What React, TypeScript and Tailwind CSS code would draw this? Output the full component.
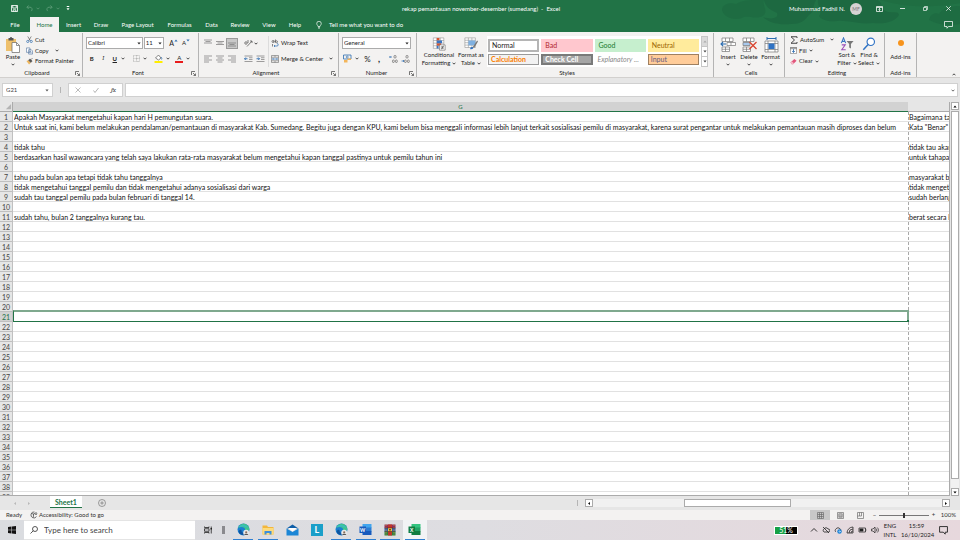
import type { ReactNode } from 'react';

type Kids = { children?: ReactNode };

/* ---------- small shared pieces ---------- */

function Caret({ className = '' }: { className?: string }) {
  return (
    <svg viewBox="0 0 6 4" className={`h-[3px] w-[4px] shrink-0 ${className}`} fill="currentColor">
      <path d="M0.6 0.6h4.8L3 3.4z" />
    </svg>
  );
}

function Chevron({ className = '' }: { className?: string }) {
  return (
    <svg viewBox="0 0 6 4" className={`h-[3px] w-[4px] shrink-0 ${className}`} fill="none" stroke="currentColor" strokeWidth="1.2">
      <path d="M0.8 0.8L3 3l2.2-2.2" />
    </svg>
  );
}

function Launcher() {
  return (
    <button aria-label="More options" className="absolute right-[2px] bottom-px">
      <svg viewBox="0 0 10 10" className="h-[5px] w-[5px]" fill="none" stroke="#555" strokeWidth="1.6">
        <path d="M1 8V1h7M4 4l5 5M9 5v4H5" />
      </svg>
    </button>
  );
}

function Group({ title, className, launcher, children }: Kids & { title: string; className: string; launcher?: boolean }) {
  return (
    <section className={`relative flex shrink-0 flex-col justify-between border-r border-[#b4b4b4] ${className}`}>
      <div className="flex h-[34px]">{children}</div>
      <div className="h-[8px] text-center leading-[8px]">{title}</div>
      {launcher && <Launcher />}
    </section>
  );
}

function IconButton({ label, className = '', children }: Kids & { label: string; className?: string }) {
  return (
    <button aria-label={label} className={`flex h-[11px] w-[12px] items-center justify-center ${className}`}>
      {children}
    </button>
  );
}

function Lines({ rows, className = '' }: { rows: [number, number, number][]; className?: string }) {
  return (
    <svg viewBox="0 0 16 16" className={`h-[8px] w-[8px] ${className}`} stroke="#777" strokeWidth="1.4">
      {rows.map(([y, a, b]) => (
        <path key={y} d={`M${a} ${y}H${b}`} />
      ))}
    </svg>
  );
}

function Picker({ label, value, width }: { label: string; value: string; width: string }) {
  return (
    <label className={`relative flex h-[12px] items-center border border-[#ababab] bg-white ${width}`}>
      <span className="sr-only">{label}</span>
      <select className="w-full appearance-none pl-[1px] leading-[10px] outline-none" defaultValue={value}>
        <option>{value}</option>
      </select>
      <Caret className="absolute right-[1px]" />
    </label>
  );
}

/* ---------- title bar ---------- */

function TitleArt() {
  return (
    <svg viewBox="0 0 240 32" className="absolute top-0 right-0 h-[32px] w-[240px]" fill="#1b633d">
      <path d="M2 10c0-6 8-8 14-6 6-4 14-4 22-4h6c-2 6 4 10 0 15-6 5-14 1-20 2-6 4-20 2-22-7z" opacity=".45" />
      <path d="M44 0h52c-4 7-1 11-7 15-5 6-8 9-18 9-12 1-22-1-28-7 9 3 16 1 14-4-7-3-12-7-13-13z" opacity=".6" />
      <path d="M98 0h60c6 4 2 10 10 12 6 1 10-1 11 3-5 8-16 9-26 8-14 2-24-3-36-2-8 1-16-1-18-5 4-4-2-10-1-16z" opacity=".6" />
      <path d="M209 20c1-5 6-8 10-6 3-6 12-8 21-8v18c-10 2-22 1-31-4z" opacity=".45" />
      <path d="M160 0h80v3c-20 4-50 6-80-3z" opacity=".3" />
    </svg>
  );
}

const tabs: [string, string][] = [
  ['Insert', 'w-[29px]'],
  ['Draw', 'w-[26px]'],
  ['Page Layout', 'w-[47px]'],
  ['Formulas', 'w-[37px]'],
  ['Data', 'w-[27px]'],
  ['Review', 'w-[30px]'],
  ['View', 'w-[28px]'],
  ['Help', 'w-[24px]'],
];

function Header() {
  return (
    <header className="relative shrink-0 bg-[#217346] text-white">
      <TitleArt />
      <div className="relative flex h-[17px] items-center">
        <div className="flex flex-1 items-center pl-[11px]">
          <button aria-label="Save">
            <svg viewBox="0 0 16 16" className="h-[7px] w-[7px]" fill="none" stroke="white" strokeWidth="2">
              <path d="M1 1h14v14H1zM4 1v6h8V1M5 15v-4h6v4" />
            </svg>
          </button>
          <button aria-label="Undo" className="ml-[8px] flex items-center gap-[3px] text-[#5d9b78]">
            <svg viewBox="0 0 16 16" className="h-[7px] w-[7px]" fill="none" stroke="currentColor" strokeWidth="2">
              <path d="M6 1L2 5l4 4M2 5h7a5 5 0 0 1 3 9" />
            </svg>
            <Chevron />
          </button>
          <button aria-label="Redo" className="ml-[6px] flex items-center gap-[3px] text-[#5d9b78]">
            <svg viewBox="0 0 16 16" className="h-[7px] w-[7px]" fill="none" stroke="currentColor" strokeWidth="2">
              <path d="M10 1l4 4-4 4M14 5H7a5 5 0 0 0-3 9" />
            </svg>
            <Chevron />
          </button>
          <button aria-label="Customize toolbar" className="ml-[6px]">
            <svg viewBox="0 0 6 8" className="h-[5px] w-[4px]" fill="white">
              <path d="M1 0h4v1.400H1zM0.600 3.400h4.800L3 6.600z" />
            </svg>
          </button>
        </div>
        <h1 className="whitespace-pre">rekap pemantauan november-desember (sumedang)  -  Excel</h1>
        <div className="flex flex-1 items-center justify-end pr-[9px]">
          <span>Muhammad Fadhil N.</span>
          <span className="ml-[5px] flex h-[12px] w-[12px] items-center justify-center rounded-full bg-[#d6d2d3] text-[5px] text-[#777]">MF</span>
          <button aria-label="Ribbon display options" className="ml-[14px]">
            <svg viewBox="0 0 14 12" className="h-[6px] w-[7px]" fill="none" stroke="white" strokeWidth="1.5">
              <path d="M1 1h12v10H1zM1 3h12M7 10V5M5 7l2-2 2 2" />
            </svg>
          </button>
          <button aria-label="Minimize" className="ml-[17px]">
            <svg viewBox="0 0 10 10" className="h-[5px] w-[5px]" stroke="white" strokeWidth="1.600"><path d="M0 5h10" /></svg>
          </button>
          <button aria-label="Restore" className="ml-[18px]">
            <svg viewBox="0 0 10 10" className="h-[5px] w-[5px]" fill="none" stroke="white" strokeWidth="1.300"><path d="M1 3h6v6H1zM3 3V1h6v6H7" /></svg>
          </button>
          <button aria-label="Close" className="ml-[18px]">
            <svg viewBox="0 0 10 10" className="h-[5px] w-[5px]" stroke="white" strokeWidth="1.500"><path d="M0.500 0.500l9 9M9.500 0.500l-9 9" /></svg>
          </button>
        </div>
      </div>
      <nav className="relative flex h-[15px] items-center">
        <button className="w-[30px] text-center">File</button>
        <button className="h-full w-[29px] bg-[#f3f2f1] text-center text-[#217346]">Home</button>
        {tabs.map(([name, w]) => (
          <button key={name} className={`${w} whitespace-nowrap text-center`}>{name}</button>
        ))}
        <button className="ml-[9px] flex items-center gap-[7px]">
          <svg viewBox="0 0 12 16" className="h-[8px] w-[6px]" fill="none" stroke="white" strokeWidth="1.400">
            <path d="M4 11C4 9 1.500 8 1.500 5a4.500 4.500 0 0 1 9 0c0 3-2.500 4-2.500 6zM4 13.500h4M5 15.500h2" />
          </svg>
          Tell me what you want to do
        </button>
        <button aria-label="Comments" className="mr-[7px] ml-auto">
          <svg viewBox="0 0 18 16" className="h-[8px] w-[9px]" fill="none" stroke="white" strokeWidth="1.500">
            <path d="M1 1h16v10H9l-3 3.500V11H1z" />
          </svg>
        </button>
      </nav>
    </header>
  );
}

/* ---------- ribbon ---------- */

function Clipboard() {
  return (
    <Group title="Clipboard" className="w-[83px] pr-[8px]" launcher>
      <button className="flex w-[29px] flex-col items-center pt-[4px]">
        <svg viewBox="0 0 30 32" className="h-[16px] w-[15px]">
          <path d="M2 4h20v24H2z" fill="#eec06c" />
          <path d="M7 2h3a2 2 0 0 1 4 0h3v5H7z" fill="#555" />
          <path d="M14 11h9l6 6v14H14z" fill="#fff" stroke="#666" strokeWidth="1.400" />
          <path d="M23 11v6h6" fill="none" stroke="#666" strokeWidth="1.400" />
        </svg>
        <span className="leading-[8px]">Paste</span>
        <Chevron className="mt-[2px]" />
      </button>
      <div className="flex flex-col pt-[1px]">
        <button className="flex h-[12px] items-center gap-[2px] whitespace-nowrap">
          <svg viewBox="0 0 16 16" className="h-[7px] w-[7px]" fill="none">
            <path d="M4 1l6 10M12 1L6 11" stroke="#555" strokeWidth="1.500" />
            <circle cx="4" cy="12.500" r="2.500" stroke="#2b6cb0" strokeWidth="1.600" />
            <circle cx="12" cy="12.500" r="2.500" stroke="#2b6cb0" strokeWidth="1.600" />
          </svg>
          Cut
        </button>
        <button className="flex h-[11px] items-center gap-[2px] whitespace-nowrap">
          <svg viewBox="0 0 16 16" className="h-[8px] w-[7px]" fill="#fff" stroke="#4a6f9a" strokeWidth="1.400">
            <path d="M1 1h8v10H1zM6 5h6l3 3v7H6zM8 9h4M8 12h5" />
          </svg>
          Copy
          <Chevron className="ml-[4px]" />
        </button>
        <button className="flex h-[12px] items-center gap-[2px] whitespace-nowrap">
          <svg viewBox="0 0 16 16" className="h-[7px] w-[7px]">
            <path d="M1 7l5-2 5 6-4 4z" fill="#eeb65c" />
            <path d="M6 5l3-3 5 5-3 3zM11 4l4-4" fill="#555" stroke="#555" strokeWidth="1.500" />
          </svg>
          Format Painter
        </button>
      </div>
    </Group>
  );
}

function FontGroup() {
  return (
    <Group title="Font" className="w-[116px] pr-[8px] pl-[3px]" launcher>
      <div className="w-full shrink-0">
        <div className="mt-[4px] flex h-[12px] items-center">
          <Picker label="Font name" value="Calibri" width="w-[61px]" />
          <Picker label="Font size" value="11" width="ml-[1px] w-[22px]" />
          <button className="ml-[5px] flex items-start text-[7px] leading-[8px]">A<Caret className="rotate-180 text-[#2b6cb0]" /></button>
          <button className="ml-[4px] flex items-start text-[6px] leading-[8px]">A<Caret className="text-[#2b6cb0]" /></button>
        </div>
        <div className="mt-[4px] flex h-[11px] items-center">
          <IconButton label="Bold"><b>B</b></IconButton>
          <IconButton label="Italic"><i className="font-serif">I</i></IconButton>
          <IconButton label="Underline"><span className="font-bold underline">U</span></IconButton>
          <Chevron />
          <IconButton label="Borders" className="ml-[6px]">
            <svg viewBox="0 0 14 14" className="h-[7px] w-[7px]" fill="none" stroke="#999" strokeWidth="1.200" strokeDasharray="1.500 1">
              <path d="M1 1h12v12H1zM7 1v12M1 7h12" />
            </svg>
          </IconButton>
          <Chevron className="ml-px" />
          <IconButton label="Fill color" className="ml-[6px]">
            <svg viewBox="0 0 18 18" className="h-[9px] w-[9px]">
              <path d="M3 8l6-6 5 6-5 4z" fill="#fff" stroke="#555" strokeWidth="1.400" />
              <path d="M14 6c2 3 2 4 1 5" stroke="#2b6cb0" strokeWidth="1.600" fill="none" />
              <path d="M1 14h16v4H1z" fill="#ffee00" />
            </svg>
          </IconButton>
          <Chevron className="ml-px" />
          <IconButton label="Font color" className="ml-[4px]">
            <span className="border-b-2 border-[#e81c1c] px-[2px] leading-[6px]">A</span>
          </IconButton>
          <Chevron className="ml-px" />
        </div>
      </div>
    </Group>
  );
}

function Indent({ flip }: { flip?: boolean }) {
  return (
    <svg viewBox="0 0 18 16" className="h-[8px] w-[9px]" fill="none" stroke="#777" strokeWidth="1.400">
      <path d="M1 2h16M10 5.500h7M10 9h7M1 13h16" />
      <path d={flip ? 'M1 7.500h6M4.500 5L7 7.500 4.500 10' : 'M7 7.500H1M3.500 5L1 7.500 3.500 10'} stroke="#2b6cb0" strokeWidth="1.800" />
    </svg>
  );
}

function Alignment() {
  return (
    <Group title="Alignment" className="w-[140px] pr-[8px] pl-[3px]" launcher>
      <div className="w-[66px] shrink-0">
        <div className="mt-[4px] flex h-[12px] items-center">
          <IconButton label="Top align"><Lines rows={[[2, 0, 16], [5, 3, 13], [8, 0, 16]]} /></IconButton>
          <IconButton label="Middle align"><Lines rows={[[5, 0, 16], [8, 3, 13], [11, 0, 16]]} /></IconButton>
          <IconButton label="Bottom align" className="border border-[#9a9a9a] bg-[#c8c8c8]"><Lines rows={[[8, 0, 16], [11, 3, 13], [14, 0, 16]]} /></IconButton>
          <IconButton label="Orientation" className="ml-[4px]">
            <svg viewBox="0 0 18 16" className="h-[8px] w-[9px]" fill="none" stroke="#555" strokeWidth="1.500">
              <path d="M6 15L16 4M16 4v4M16 4h-4" />
              <circle cx="4" cy="8" r="2.500" />
              <path d="M8 2v6" />
            </svg>
          </IconButton>
          <Chevron />
        </div>
        <div className="mt-[4px] flex h-[11px] items-center">
          <IconButton label="Align left"><Lines rows={[[2, 0, 16], [6, 0, 10], [10, 0, 16], [14, 0, 10]]} /></IconButton>
          <IconButton label="Center"><Lines rows={[[2, 0, 16], [6, 3, 13], [10, 0, 16], [14, 3, 13]]} /></IconButton>
          <IconButton label="Align right"><Lines rows={[[2, 0, 16], [6, 6, 16], [10, 0, 16], [14, 6, 16]]} /></IconButton>
          <IconButton label="Decrease indent" className="ml-[4px]"><Indent /></IconButton>
          <IconButton label="Increase indent"><Indent flip /></IconButton>
        </div>
      </div>
      <div className="mt-[3px] border-l border-[#dcdcdc] pl-[2px]">
        <button className="mt-[1px] flex h-[12px] items-center gap-[2px] whitespace-nowrap">
          <svg viewBox="0 0 16 16" className="h-[8px] w-[8px]" fill="none" stroke="#555" strokeWidth="1.400">
            <circle cx="4" cy="5" r="2" /><path d="M6 3v4M9 1v6M3 10v5" /><circle cx="11" cy="5.500" r="2" />
            <path d="M6 14h6a2.500 2.500 0 0 0 0-5M8 12l-2 2 2 2" stroke="#2b6cb0" />
          </svg>
          Wrap Text
        </button>
        <button className="mt-[4px] flex h-[11px] items-center gap-[2px] whitespace-nowrap">
          <svg viewBox="0 0 16 16" className="h-[8px] w-[8px]" fill="none" stroke="#777" strokeWidth="1.300">
            <path d="M1 1h14v14H1zM1 4.500h14M1 11.500h14M8 1v3M8 12v3" />
            <path d="M3 8h10M5 6L3 8l2 2M11 6l2 2-2 2" stroke="#2b6cb0" />
          </svg>
          Merge &amp; Center
          <Chevron className="ml-[4px]" />
        </button>
      </div>
    </Group>
  );
}

function Decimals({ arrow }: { arrow: string }) {
  return (
    <svg viewBox="0 0 18 16" className="h-[8px] w-[9px]" fill="none" stroke="#666" strokeWidth="1.400">
      <rect x="10" y="1" width="4" height="5" rx="1.500" />
      <rect x="7" y="10" width="3.500" height="5" rx="1.500" />
      <rect x="13" y="10" width="3.500" height="5" rx="1.500" />
      <path d={arrow} stroke="#2b6cb0" />
    </svg>
  );
}

function NumberGroup() {
  return (
    <Group title="Number" className="w-[78px] pr-[5px] pl-[3px]" launcher>
      <div className="w-full shrink-0">
        <div className="mt-[4px] flex h-[12px] items-center">
          <Picker label="Number format" value="General" width="w-[70px]" />
        </div>
        <div className="mt-[4px] flex h-[11px] items-center">
          <IconButton label="Accounting format">
            <svg viewBox="0 0 18 18" className="h-[9px] w-[9px]" fill="none">
              <path d="M1 2h15v8H1z" stroke="#2b6cb0" strokeWidth="1.600" />
              <circle cx="8.500" cy="6" r="2" stroke="#2b6cb0" strokeWidth="1.300" />
              <path d="M2 12h7v5H2zM9 9h7v3H9z" fill="#f3b55a" />
            </svg>
          </IconButton>
          <Chevron className="ml-px" />
          <IconButton label="Percent" className="ml-[3px] text-[8px]">%</IconButton>
          <IconButton label="Comma"><b className="text-[9px] leading-[6px]">,</b></IconButton>
          <IconButton label="Increase decimal" className="ml-[3px]"><Decimals arrow="M6 4H1M3 2L1 4l2 2" /></IconButton>
          <IconButton label="Decrease decimal"><Decimals arrow="M1 12h5M4 10l2 2-2 2" /></IconButton>
        </div>
      </div>
    </Group>
  );
}

const styleCells: [string, string][] = [
  ['Normal', 'border-2 border-[#b5b5b5] bg-white text-[#222]'],
  ['Bad', 'border-2 border-[#ffc7ce] bg-[#ffc7ce] text-[#b01f2e]'],
  ['Good', 'border-2 border-[#c6efce] bg-[#c6efce] text-[#217a2e]'],
  ['Neutral', 'border-2 border-[#ffeb9c] bg-[#ffeb9c] text-[#9c6500]'],
  ['Calculation', 'border border-[#9a9a9a] bg-[#f2f2f2] font-bold text-[#fa7d00]'],
  ['Check Cell', 'border-2 border-[#7a7a7a] bg-[#a5a5a5] font-bold text-white'],
  ['Explanatory ...', 'border border-white bg-white italic text-[#8a8a8a]'],
  ['Input', 'border border-[#a08060] bg-[#ffcc99] text-[#5f5a80]'],
];

function Styles() {
  return (
    <Group title="Styles" className="w-[297px] pl-[4px]">
      <button className="flex w-[36px] flex-col items-center pt-[4px] leading-[8px]">
        <svg viewBox="0 0 32 32" className="h-[16px] w-[16px]">
          <path d="M3 2h24v24H3zM3 8h24M3 14h24M3 20h24M11 2v24M19 2v24" fill="#fff" stroke="#888" strokeWidth="1.200" />
          <path d="M11 2h6v6h-6zM11 14h10v6H11z" fill="#d9552f" />
          <path d="M11 8h12v6H11zM11 20h4v6h-4z" fill="#3a76c2" />
          <path d="M17 18h13v12H17z" fill="#fff" stroke="#666" strokeWidth="1.400" />
          <path d="M20 22.500h7M20 25.500h7M26 20l-4 8" stroke="#333" strokeWidth="1.300" />
        </svg>
        <span>Conditional</span>
        <span className="flex items-center gap-[2px]">Formatting <Chevron /></span>
      </button>
      <button className="flex w-[28px] flex-col items-center pt-[4px] leading-[8px]">
        <svg viewBox="0 0 32 32" className="h-[16px] w-[16px]">
          <path d="M2 2h24v22H2zM2 7.500h24M2 13h24M2 18.500h24M10 2v22M18 2v22" fill="#fff" stroke="#888" strokeWidth="1.200" />
          <path d="M10 8h16v11H10z" fill="#7fb0e0" />
          <path d="M14 28c0-5 3-6 6-5 3 3 0 6-6 5z" fill="#2f6fbd" />
          <path d="M20 23L30 8l2 2-9 15z" fill="#777" />
        </svg>
        <span className="whitespace-nowrap">Format as</span>
        <span className="flex items-center gap-[2px]">Table <Chevron /></span>
      </button>
      <div className="mt-[3px] mr-[5px] ml-[2px] flex h-[31px] flex-1 bg-white pl-[1px]">
        <div className="grid flex-1 grid-cols-4 content-center gap-x-[2px] gap-y-[2px] pr-[2px] text-[7px]">
          {styleCells.map(([name, look], i) => (
            <button key={name} className={`${look} ${i < 4 ? 'h-[13px]' : 'h-[11px]'} flex items-center pl-[2px] leading-[8px] whitespace-nowrap`}>
              {name}
            </button>
          ))}
        </div>
        <div className="flex w-[7px] flex-col border border-[#c6c6c6] text-[#444]">
          <button aria-label="Scroll up" className="flex flex-1 items-center justify-center bg-[#dadada] text-[#aaa]"><Caret className="rotate-180" /></button>
          <button aria-label="Scroll down" className="flex flex-1 items-center justify-center border-y border-[#c6c6c6]"><Caret /></button>
          <button aria-label="More styles" className="flex flex-1 items-center justify-center"><Caret /></button>
        </div>
      </div>
    </Group>
  );
}

function CellIcon({ children }: Kids) {
  return (
    <svg viewBox="0 0 32 32" className="h-[16px] w-[16px]" fill="#fff" stroke="#777" strokeWidth="1.400">
      <path d="M4 2h22v7H4zM11 2v7M19 2v7M4 20h15v9H4zM11 20v9M4 24.500h15" />
      {children}
    </svg>
  );
}

function BigButton({ label, className, children }: Kids & { label: string; className: string }) {
  return (
    <button className={`flex flex-col items-center pt-[4px] leading-[8px] ${className}`}>
      {children}
      <span>{label}</span>
      <Chevron className="mt-[2px]" />
    </button>
  );
}

function Cells() {
  return (
    <Group title="Cells" className="w-[71px] pl-[4px]">
      <BigButton label="Insert" className="w-[20px]">
        <CellIcon><path d="M14 11h17v6H14zM22 11v6" /><path d="M12 14H2M6 10l-4 4 4 4" fill="none" stroke="#2b6cb0" strokeWidth="2.200" /></CellIcon>
      </BigButton>
      <BigButton label="Delete" className="w-[22px]">
        <CellIcon><path d="M4 11h14v6H4z" fill="#a9c9ee" /><path d="M17 10l14 14M31 10L17 24" stroke="#d9442f" strokeWidth="2.600" /></CellIcon>
      </BigButton>
      <BigButton label="Format" className="w-[21px]">
        <svg viewBox="0 0 32 32" className="h-[16px] w-[16px]" fill="#fff" stroke="#777" strokeWidth="1.400">
          <path d="M4 8h26v22H4zM10 8v22M24 8v22M4 13h26M4 25h26" />
          <path d="M11 13h12v11H11z" fill="#2f72c4" stroke="none" />
          <path d="M8 3h18M8 0v6M26 0v6" fill="none" stroke="#2b6cb0" strokeWidth="2" />
        </svg>
      </BigButton>
    </Group>
  );
}

function Editing() {
  return (
    <Group title="Editing" className="w-[100px] pl-[5px]">
      <div className="flex w-[46px] flex-col pt-[1px]">
        <button className="flex h-[12px] items-center gap-[2px] whitespace-nowrap">
          <svg viewBox="0 0 16 16" className="h-[8px] w-[8px]" fill="none" stroke="#444" strokeWidth="2"><path d="M14 4V1.500H2L9 8l-7 6.500h12V12" /></svg>
          AutoSum <Chevron className="ml-[4px]" />
        </button>
        <button className="flex h-[11px] items-center gap-[2px] whitespace-nowrap">
          <svg viewBox="0 0 16 16" className="h-[7px] w-[7px]" fill="#fff" stroke="#777" strokeWidth="1.400">
            <path d="M1 1h14v14H1z" /><path d="M1 1h14v3H1z" fill="#bbb" /><path d="M8 5v7M5 9l3 3.500L11 9" fill="none" stroke="#2b6cb0" strokeWidth="2" />
          </svg>
          Fill <Chevron />
        </button>
        <button className="flex h-[12px] items-center gap-[2px] whitespace-nowrap">
          <svg viewBox="0 0 16 16" className="h-[7px] w-[7px]"><path d="M1 10l9-8 5 4-8 8H4z" fill="#e2557b" /><path d="M1 10l3-2.500 5 4.500-2 2H4z" fill="#f3b9c8" /></svg>
          Clear <Chevron />
        </button>
      </div>
      <button className="flex w-[22px] flex-col items-center pt-[4px] leading-[8px]">
        <svg viewBox="0 0 32 32" className="h-[16px] w-[16px]" fill="none">
          <path d="M3 14L8 2l5 12M5 10h6" stroke="#3a76c2" strokeWidth="2.400" />
          <path d="M4 18h8L4 29h9" stroke="#9a4fb8" strokeWidth="2.400" />
          <path d="M15 9h16l-6 7v10l-4-2v-8z" fill="#777" />
        </svg>
        <span className="whitespace-nowrap">Sort &amp;</span>
        <span className="flex items-center gap-[2px]">Filter <Chevron /></span>
      </button>
      <button className="flex w-[22px] flex-col items-center pt-[4px] leading-[8px]">
        <svg viewBox="0 0 32 32" className="h-[16px] w-[16px]" fill="#fff" stroke="#2f72c4" strokeWidth="2.600">
          <circle cx="20" cy="11" r="8.500" /><path d="M14 17L3 29" strokeWidth="3.400" />
        </svg>
        <span className="whitespace-nowrap">Find &amp;</span>
        <span className="flex items-center gap-[2px]">Select <Chevron /></span>
      </button>
    </Group>
  );
}

function Ribbon() {
  return (
    <div className="relative flex h-[46px] shrink-0 border-b border-[#d2d0ce] bg-[#f3f2f1] pt-[1px] text-[#222]">
      <Clipboard />
      <FontGroup />
      <Alignment />
      <NumberGroup />
      <Styles />
      <Cells />
      <Editing />
      <Group title="Add-ins" className="w-[32px]">
        <button className="flex w-full flex-col items-center pt-[7px]">
          <span className="mb-[7px] h-[6px] w-[6px] rounded-full bg-[#f7941d]" />
          <span className="leading-[8px]">Add-ins</span>
        </button>
      </Group>
      <button aria-label="Collapse ribbon" className="mr-[4px] mb-[1px] ml-auto self-end">
        <Chevron className="rotate-180" />
      </button>
    </div>
  );
}

/* ---------- formula bar ---------- */

function FormulaBar() {
  return (
    <div className="flex h-[24px] shrink-0 items-center bg-[#e6e6e6] pr-[2px] pl-[2px]">
      <label className="flex h-[14px] w-[51px] items-center border border-[#d0d0d0] bg-white pr-[3px]">
        <span className="sr-only">Name box</span>
        <input className="w-full min-w-0 pl-[3px] text-[#444] outline-none" defaultValue="G21" />
        <Caret className="text-[#555]" />
      </label>
      <span className="mx-[7px] h-[6px] w-[1px] bg-[#b5b5b5]" />
      <div className="flex h-[14px] w-[55px] items-center justify-around border border-[#d0d0d0] bg-white">
        <button aria-label="Cancel">
          <svg viewBox="0 0 12 12" className="h-[6px] w-[6px]" stroke="#aaa" strokeWidth="1.600"><path d="M1 1l10 10M11 1L1 11" /></svg>
        </button>
        <button aria-label="Enter">
          <svg viewBox="0 0 12 12" className="h-[6px] w-[6px]" fill="none" stroke="#aaa" strokeWidth="1.800"><path d="M1 7l3 4 7-9" /></svg>
        </button>
        <button aria-label="Insert function" className="font-serif text-[7px] leading-[8px] text-[#333] italic">fx</button>
      </div>
      <label className="ml-[2px] flex h-[14px] flex-1 items-center border border-[#d0d0d0] bg-white pr-[2px]">
        <span className="sr-only">Formula</span>
        <input className="min-w-0 flex-1 outline-none" />
        <Chevron className="text-[#444]" />
      </label>
    </div>
  );
}

/* ---------- sheet ---------- */

const columnG: Record<number, string> = {
  1: 'Apakah Masyarakat mengetahui kapan hari H pemungutan suara.',
  2: 'Untuk saat ini, kami belum melakukan pendalaman/pemantauan di masyarakat Kab. Sumedang. Begitu juga dengan KPU, kami belum bisa menggali informasi lebih lanjut terkait sosialisasi pemilu di masyarakat, karena surat pengantar untuk melakukan pemantauan masih diproses dan belum',
  4: 'tidak tahu',
  5: 'berdasarkan hasil wawancara yang telah saya lakukan rata-rata masyarakat belum mengetahui kapan tanggal pastinya untuk pemilu tahun ini',
  7: 'tahu pada bulan apa tetapi tidak tahu tanggalnya',
  8: 'tidak mengetahui tanggal pemilu dan tidak mengetahui adanya sosialisasi dari warga',
  9: 'sudah tau tanggal pemilu pada bulan februari di tanggal 14.',
  11: 'sudah tahu, bulan 2 tanggalnya kurang tau.',
};

const columnH: Record<number, string> = {
  1: 'Bagaimana ta',
  2: 'Kata "Benar"',
  4: 'tidak tau akan',
  5: 'untuk tahapan',
  7: 'masyarakat be',
  8: 'tidak mengeta',
  9: 'sudah berlang',
  11: 'berat secara k',
};

const rowNumbers = Array.from({ length: 39 }, (_, i) => i + 1);

function Sheet() {
  return (
    <main className="flex min-h-0 flex-1 bg-[#e6e6e6]">
      <div className="min-w-0 flex-1 overflow-hidden border-r border-b border-[#ababab] bg-white">
        <table className="w-full table-fixed border-separate border-spacing-0 text-[#111]">
          <colgroup>
            <col className="w-[13px]" />
            <col />
            <col className="w-[41px]" />
          </colgroup>
          <thead>
            <tr className="h-[10px] text-[6px] leading-[9px]">
              <th className="border-r border-b border-[#ababab] bg-[#e6e6e6] p-0">
                <svg viewBox="0 0 8 8" className="ml-auto h-[7px] w-[7px]" fill="#b4b4b4"><path d="M7 1v6H1z" /></svg>
              </th>
              <th className="border-b border-[#217346] bg-[#d2d2d2] p-0 font-normal text-[#217346]">G</th>
              <th className="border-b border-[#ababab] bg-[#e6e6e6] p-0" />
            </tr>
          </thead>
          <tbody className="text-[7px] leading-[11px]">
            {rowNumbers.map((n) => {
              const active = n === 21;
              return (
                <tr key={n} className="h-[10px]">
                  <th className={`border-r border-b border-[#c0c0c0] p-0 font-normal ${active ? 'bg-[#d2d2d2] text-[#217346]' : 'bg-[#e6e6e6] text-[#444]'}`}>
                    <div className="h-[9px]">{n}</div>
                  </th>
                  <td className="relative h-[10px] border-b border-[#e1e1e1] p-0 pl-[1px]">
                    <div className="h-[9px] overflow-x-clip whitespace-nowrap">{columnG[n]}</div>
                    {active && (
                      <div className="absolute -top-[2px] -right-px -bottom-px left-0 border border-t-2 border-r-2 border-[#217346] border-t-[#7fa98e] border-r-[#7fa98e]">
                        <span className="absolute -right-[2px] -bottom-px h-[2px] w-[2px] bg-[#217346]" />
                      </div>
                    )}
                  </td>
                  <td className="h-[10px] border-b border-[#e1e1e1] bg-[linear-gradient(#a8a8a8_60%,transparent_60%)] bg-[length:1px_5px] bg-repeat-y p-0 pl-[1px]">
                    <div className="h-[9px] overflow-x-clip whitespace-nowrap">{columnH[n]}</div>
                  </td>
                </tr>
              );
            })}
          </tbody>
        </table>
      </div>
      <div className="flex w-[10px] shrink-0 flex-col items-center px-[1px]">
        <button aria-label="Scroll up" className="flex h-[8px] w-full items-center justify-center border border-[#ababab] bg-white"><Caret className="rotate-180" /></button>
        <div className="mt-[1px] w-full flex-1 border border-[#ababab] bg-white" />
        <div className="h-[9px] w-full bg-[#f1f1f1]" />
        <button aria-label="Scroll down" className="flex h-[8px] w-full items-center justify-center border border-[#ababab] bg-white"><Caret /></button>
      </div>
    </main>
  );
}

function SheetTabs() {
  return (
    <div className="flex h-[14px] shrink-0 items-center bg-[#e6e6e6]">
      <div className="flex w-[50px] items-center gap-[10px] pl-[13px] text-[#b5b5b5]">
        <Caret className="rotate-90" />
        <Caret className="-rotate-90" />
      </div>
      <button className="h-[12px] w-[32px] self-start border-b border-[#217346] bg-white text-[7px] leading-[12px] font-bold text-[#217346]">Sheet1</button>
      <button aria-label="New sheet" className="ml-[16px]">
        <svg viewBox="0 0 16 16" className="h-[8px] w-[8px]" fill="none" stroke="#777" strokeWidth="1.400"><circle cx="8" cy="8" r="7" /><path d="M8 4.500v7M4.500 8h7" /></svg>
      </button>
      <span className="ml-auto h-[6px] w-[1px] bg-[#b5b5b5]" />
      <div className="mr-[10px] ml-[7px] flex h-[8px] w-[38%] items-center bg-[#f1f1f1]">
        <button aria-label="Scroll left" className="flex h-[8px] w-[8px] items-center justify-center border border-[#ababab] bg-white"><Caret className="rotate-90" /></button>
        <div className="ml-[25%] h-full w-[107px] border border-[#ababab] bg-white" />
        <button aria-label="Scroll right" className="ml-auto flex h-[8px] w-[8px] items-center justify-center border border-[#ababab] bg-white"><Caret className="-rotate-90" /></button>
      </div>
    </div>
  );
}

function StatusBar() {
  return (
    <div className="flex h-[10px] shrink-0 items-center bg-[#f3f2f1] text-[#333]">
      <span className="ml-[6px] w-[24px]">Ready</span>
      <svg viewBox="0 0 16 16" className="h-[8px] w-[8px]" fill="none" stroke="#444" strokeWidth="1.500">
        <path d="M9 2a6 6 0 1 0 4 9M3 5l4 1v4M7 6l3-1M7 10l-1 3M12 2v5M10 5l2 2.500L14 5" />
      </svg>
      <span className="ml-[1px]">Accessibility: Good to go</span>
      <div className="ml-auto flex h-full items-center">
        <button aria-label="Normal view" className="flex h-full w-[20px] items-center justify-center bg-[#c8c8c8]">
          <svg viewBox="0 0 14 14" className="h-[7px] w-[7px]" fill="none" stroke="#666" strokeWidth="1.300"><path d="M1 1h12v12H1zM5 1v12M9 1v12M1 5h12M1 9h12" /></svg>
        </button>
        <button aria-label="Page layout view" className="flex w-[20px] justify-center">
          <svg viewBox="0 0 14 14" className="h-[7px] w-[7px]" fill="none" stroke="#666" strokeWidth="1.300"><path d="M1 1h12v12H1zM3.500 3.500h7v7h-7zM4 6h6M4 8.500h6" /></svg>
        </button>
        <button aria-label="Page break view" className="flex w-[20px] justify-center">
          <svg viewBox="0 0 14 14" className="h-[7px] w-[7px]" fill="none" stroke="#666" strokeWidth="1.300"><path d="M1 1h12v12H1zM5 1v7h4V1M1 8h4" /></svg>
        </button>
        <button aria-label="Zoom out" className="ml-[2px] w-[5px] leading-[8px]">−</button>
        <label className="relative mx-[2px] flex w-[50px] items-center">
          <span className="sr-only">Zoom</span>
          <input
            type="range"
            defaultValue="50"
            className="h-[6px] w-full appearance-none bg-transparent [&::-webkit-slider-runnable-track]:h-px [&::-webkit-slider-runnable-track]:bg-[#777] [&::-webkit-slider-thumb]:-mt-[2px] [&::-webkit-slider-thumb]:h-[5px] [&::-webkit-slider-thumb]:w-[2px] [&::-webkit-slider-thumb]:appearance-none [&::-webkit-slider-thumb]:bg-[#333]"
          />
        </label>
        <button aria-label="Zoom in" className="w-[5px] leading-[8px]">+</button>
        <span className="w-[24px] pr-[4px] text-right">100%</span>
      </div>
    </div>
  );
}

/* ---------- taskbar ---------- */

function Edge() {
  return (
    <svg viewBox="0 0 24 24" className="h-[13px] w-[13px]">
      <circle cx="12" cy="12" r="11" fill="#1b7fd0" />
      <path d="M2 9C5 2 13-1 19 4c5 4 5 11-1 12-4 0-4-2-3-4 0-4-6-6-13-3z" fill="#3fc48f" />
      <path d="M3 8c4-6 14-5 17 1-6-4-11-4-17-1z" fill="#35b8e0" />
      <path d="M8 13c0 5 5 8 10 6-4 5-13 4-15-3 1-3 3-4 5-3z" fill="#0f559f" />
      <circle cx="17" cy="18" r="5.500" fill="#e8e8e8" />
      <circle cx="17" cy="17" r="2" fill="#8a6f5a" />
      <path d="M13 22c1-3 7-3 8 0z" fill="#555" />
    </svg>
  );
}

function Badge({ letter, dark, light, mid }: { letter: string; dark: string; light: string; mid: string }) {
  return (
    <span className="relative flex h-[13px] w-[13px] items-center">
      <svg viewBox="0 0 26 26" className="absolute h-[13px] w-[13px]">
        <path d="M7 2h18v8H7z" fill={light} />
        <path d="M7 9h18v8H7z" fill={mid} />
        <path d="M7 16h18v8H7z" fill={dark} />
        <path d="M1 7h13v13H1z" fill={dark} />
      </svg>
      <span className="relative w-[7px] text-center text-[5px] leading-[6px] font-bold text-white">{letter}</span>
    </span>
  );
}

const apps: { name: string; open: boolean; active?: boolean; icon: ReactNode }[] = [
  { name: 'Edge', open: true, icon: <Edge /> },
  {
    name: 'File Explorer',
    open: true,
    icon: (
      <svg viewBox="0 0 24 24" className="h-[12px] w-[12px]">
        <path d="M1 3h9l2 3h11v15H1z" fill="#f3b73c" /><path d="M1 8h22v13H1z" fill="#fddb7c" /><path d="M5 21v-7h14v7h-4v-3H9v3z" fill="#3a8edb" />
      </svg>
    ),
  },
  {
    name: 'Mail',
    open: false,
    icon: (
      <svg viewBox="0 0 26 24" className="h-[12px] w-[13px]">
        <path d="M1 9L13 1l12 8z" fill="#0f5ea8" /><path d="M4 8h18l-9 7z" fill="#fff" /><path d="M1 9l12 7 12-7v14H1z" fill="#1b86d6" />
      </svg>
    ),
  },
  {
    name: 'Lenovo',
    open: false,
    icon: <span className="flex h-[12px] w-[12px] items-center justify-center bg-[#1a9fc9] text-[9px] leading-[12px] font-bold text-white">L</span>,
  },
  { name: 'Edge profile', open: true, icon: <Edge /> },
  { name: 'Word', open: true, icon: <Badge letter="W" dark="#185abd" mid="#2b7cd3" light="#41a5ee" /> },
  {
    name: 'WinRAR',
    open: true,
    icon: (
      <svg viewBox="0 0 24 24" className="h-[12px] w-[12px]">
        <path d="M1 1h22v7H1z" fill="#8e2f5e" /><path d="M1 8h22v7H1z" fill="#2f5fa8" /><path d="M1 15h22v8H1z" fill="#2f8040" />
        <path d="M8 1h8v22H8z" fill="#c2342a" /><path d="M8 8h8v7H8z" fill="#f0c04a" /><path d="M10 10h4v3h-4z" fill="#7a4a1a" />
        <path d="M4 1v22M20 1v22" stroke="#d8a23c" strokeWidth="1.500" strokeDasharray="3 2" /><path d="M1 8h22M1 15h22" stroke="#3a1f1a" strokeWidth="1" />
      </svg>
    ),
  },
  { name: 'Excel', open: true, active: true, icon: <Badge letter="X" dark="#107c41" mid="#21a366" light="#33c481" /> },
];

function Tray() {
  return (
    <div className="ml-auto flex h-full items-center">
      <span className="mr-[12px] flex h-[9px] w-[24px] items-center justify-center border border-white bg-[linear-gradient(90deg,#16a045_50%,#000_50%)] text-[7px] leading-[7px] text-white">51%</span>
      <div className="flex items-center gap-[4px] text-[#222]">
        <svg viewBox="0 0 16 16" className="h-[8px] w-[8px]" fill="none" stroke="currentColor" strokeWidth="1.800"><path d="M2 11l6-6 6 6" /></svg>
        <svg viewBox="0 0 16 16" className="h-[8px] w-[8px]" fill="none" stroke="currentColor" strokeWidth="1.600"><path d="M4 12a3.500 3.500 0 0 1 0-6 4.500 4.500 0 0 1 8 0 3 3 0 0 1 1 6zM2 2l12 12" /></svg>
        <svg viewBox="0 0 16 16" className="h-[8px] w-[8px]" fill="none" stroke="currentColor" strokeWidth="1.500"><path d="M4 12a3.500 3.500 0 0 1 0-6 4.500 4.500 0 0 1 8 0 3 3 0 0 1 2 3" /><circle cx="11" cy="11" r="4.500" fill="#1b83d8" stroke="none" /><path d="M9 11h4M11 9l2 2-2 2" stroke="#fff" strokeWidth="1" /></svg>
        <svg viewBox="0 0 16 16" className="h-[8px] w-[8px]" fill="none" stroke="currentColor" strokeWidth="1.500"><path d="M2 14A12 12 0 0 1 14 2v12zM6 14a8 8 0 0 1 8-8M10 14a4 4 0 0 1 4-4" /></svg>
        <svg viewBox="0 0 18 16" className="h-[8px] w-[9px]" fill="none" stroke="currentColor" strokeWidth="1.500"><path d="M2 4h13v8H2zM16 7v2" /><path d="M4 6h6v4H4z" fill="currentColor" /></svg>
        <svg viewBox="0 0 16 16" className="h-[8px] w-[8px]" fill="none" stroke="currentColor" strokeWidth="1.400"><path d="M1 6h3l4-4v12l-4-4H1zM10 5c1.500 2 1.500 4 0 6M12.500 3c3 3 3 7 0 10" /></svg>
      </div>
      <div className="w-[22px] text-center leading-[9px]">ENG<br />INTL</div>
      <div className="w-[31px] text-center leading-[9px]">15:59<br />16/10/2024</div>
      <button aria-label="Notifications" className="mr-[12px] ml-[7px]">
        <svg viewBox="0 0 16 16" className="h-[9px] w-[9px]" fill="none" stroke="#222" strokeWidth="1.600"><path d="M1 1h14v10h-4v3.500L7.500 11H1z" /></svg>
      </button>
    </div>
  );
}

function Taskbar() {
  return (
    <footer className="flex h-[20px] shrink-0 items-center bg-linear-to-r from-[#dadce0] via-[#dedde1] to-[#e7d8dd] text-[#222]">
      <button aria-label="Start" className="flex w-[24px] justify-center">
        <svg viewBox="0 0 16 16" className="h-[8px] w-[8px]" fill="#111"><path d="M0 2l7-1v6.500H0zM8 1l8-1v7.500H8zM0 8.500h7V15l-7-1zM8 8.500h8V16l-8-1z" /></svg>
      </button>
      <label className="flex h-full w-[171px] items-center gap-[6px] border-y border-[#e4e4e4] bg-white pl-[6px]">
        <svg viewBox="0 0 16 16" className="h-[8px] w-[8px] shrink-0" fill="none" stroke="#222" strokeWidth="1.500"><circle cx="10" cy="6" r="5" /><path d="M6.500 9.500L1 15" /></svg>
        <span className="sr-only">Search</span>
        <input className="min-w-0 flex-1 text-[8px] outline-none placeholder:text-[#444]" placeholder="Type here to search" />
      </label>
      <button aria-label="Task view" className="ml-[9px]">
        <svg viewBox="0 0 18 16" className="h-[8px] w-[9px]" fill="none" stroke="#222" strokeWidth="1.600"><path d="M1 1v2h9V1M1 5.500h9v5H1zM1 15v-2h9v2M14.500 1v14" /><path d="M13 4h3v3h-3z" fill="#222" stroke="none" /></svg>
      </button>
      <span className="ml-[9px] h-[8px] w-[3px] bg-[#8a8a8e]" />
      <div className="ml-[6px] grid h-full w-[196px] grid-cols-8">
        {apps.map((a) => (
          <button
            key={a.name}
            aria-label={a.name}
            className={`flex items-center justify-center ${a.active ? 'bg-[#f2f3f5]' : ''}`}
          >
            <span className={`flex h-full w-[20px] items-center justify-center border-b ${a.open ? 'border-[#2f7fd0]' : 'border-transparent'}`}>{a.icon}</span>
          </button>
        ))}
      </div>
      <Tray />
    </footer>
  );
}

export default function App() {
  return (
    <div className="flex h-screen min-w-[920px] flex-col overflow-hidden bg-[#e6e6e6] font-['Lato','Open_Sans',sans-serif] text-[6px] leading-[8px]">
      <Header />
      <Ribbon />
      <FormulaBar />
      <Sheet />
      <SheetTabs />
      <StatusBar />
      <Taskbar />
    </div>
  );
}
